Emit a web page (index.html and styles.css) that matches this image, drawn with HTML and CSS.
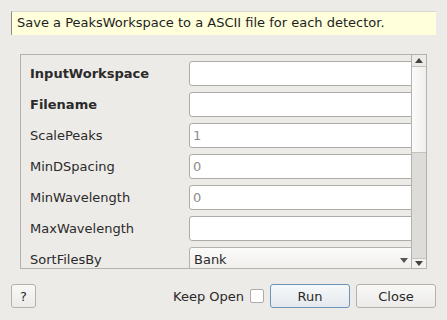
FILE: index.html
```html
<!DOCTYPE html>
<html lang="en">
<head>
  <meta charset="UTF-8" />
  <title>SaveIsawPeaks</title>
  <link rel="stylesheet" href="styles.css">
</head>
<body>
  <div class="tip">Save a PeaksWorkspace to a ASCII file for each detector.</div>

  <div class="scroll">
    <div class="rows">
      <label class="req">InputWorkspace</label>
      <div class="field"><input type="text"></div>
      <label class="req">Filename</label>
      <div class="field"><input type="text"></div>
      <label>ScalePeaks</label>
      <div class="field"><input type="text" placeholder="1"></div>
      <label>MinDSpacing</label>
      <div class="field"><input type="text" placeholder="0"></div>
      <label>MinWavelength</label>
      <div class="field"><input type="text" placeholder="0"></div>
      <label>MaxWavelength</label>
      <div class="field"><input type="text"></div>
      <label>SortFilesBy</label>
      <div class="field">
        <div class="combo">Bank<span class="arrow"></span></div>
      </div>
    </div>
    <div class="scrollbar">
      <div class="sb-btn up"><span class="tri-up"></span></div>
      <div class="handle"></div>
      <div class="track"></div>
      <div class="sb-btn down"><span class="tri-down"></span></div>
    </div>
  </div>

  <div class="footer">
    <button class="btn help">?</button>
    <span class="spacer"></span>
    <span class="keep">Keep Open</span>
    <span class="check"></span>
    <button class="btn run">Run</button>
    <button class="btn close">Close</button>
  </div>
</body>
</html>
```

FILE: styles.css
```css
* {
  box-sizing: border-box;
  margin: 0;
  padding: 0;
  font-family: 'DejaVu Sans', sans-serif;
  font-size: 13px;
}
body {
  background: #edebe8;
  color: #2c2c2c;
  width: 447px;
  height: 320px;
  overflow: hidden;
}
.tip {
  margin: 11px 11px 0 11px;
  height: 24px;
  background: #ffffdc;
  border-left: 1px solid #8c8c88;
  border-top: 1px solid #d6d5cf;
  padding-left: 5px;
  line-height: 22px;
  color: #1e1e1e;
}
.scroll {
  margin: 19px 0 0 20px;
  width: 407px;
  height: 215px;
  border: 1px solid #b4b2ae;
  display: flex;
  overflow: hidden;
}
.rows {
  flex: 1;
  overflow: hidden;
  display: grid;
  grid-template-columns: 159px 225px;
  grid-auto-rows: 25px;
  row-gap: 6px;
  padding: 6px 0 0 9px;
}
.rows label {
  display: flex;
  align-items: center;
  color: #2a2a2a;
}
.rows label.req {
  font-weight: bold;
}
.field input {
  width: 100%;
  height: 25px;
  border: 1px solid #adaba7;
  border-radius: 3px;
  background: #fff;
  padding: 0 3px;
  color: #2a2a2a;
  outline: none;
}
.field input::placeholder {
  color: #8c8c8c;
}
.combo {
  height: 25px;
  border: 1px solid #b4b2ae;
  border-radius: 3px;
  background: linear-gradient(#fbfbfa, #efeeec);
  padding-left: 4px;
  line-height: 23px;
  position: relative;
  color: #2a2a2a;
}
.combo .arrow {
  position: absolute;
  right: 5px;
  top: 10px;
  border-left: 4px solid transparent;
  border-right: 4px solid transparent;
  border-top: 5px solid #555;
}
.scrollbar {
  width: 15px;
  border-left: 1px solid #b4b2ae;
  display: flex;
  flex-direction: column;
  background: #dedcd9;
}
.sb-btn {
  height: 12px;
  background: #edebe8;
  display: flex;
  justify-content: center;
  align-items: center;
}
.sb-btn.up {
  border-bottom: 1px solid #c4c2be;
}
.sb-btn.down {
  height: 10px;
  border-top: 1px solid #c4c2be;
  background: #f3f2f0;
}
.tri-up {
  border-left: 4px solid transparent;
  border-right: 4px solid transparent;
  border-bottom: 5px solid #444;
}
.tri-down {
  border-left: 4px solid transparent;
  border-right: 4px solid transparent;
  border-top: 5px solid #444;
}
.handle {
  height: 86px;
  background: linear-gradient(90deg, #fbfbfa, #efeeec);
  border-bottom: 1px solid #c4c2be;
}
.track {
  flex: 1;
}
.footer {
  display: flex;
  align-items: center;
  margin: 15px 11px 0 11px;
  height: 24px;
}
.spacer {
  flex: 1;
}
.btn {
  height: 24px;
  border: 1px solid #b4b2ae;
  border-radius: 3px;
  background: linear-gradient(#f8f8f7, #ecebe9);
  color: #2a2a2a;
}
.help {
  width: 25px;
}
.keep {
  color: #2a2a2a;
}
.check {
  width: 14px;
  height: 14px;
  background: #fff;
  border: 1px solid #aeaca8;
  border-radius: 2px;
  margin: 0 6px 0 6px;
}
.run {
  width: 80px;
  border-color: #6b94b8;
  background: linear-gradient(#f6f8fa, #e4e9ee);
  margin-right: 6px;
}
.close {
  width: 80px;
}
```
